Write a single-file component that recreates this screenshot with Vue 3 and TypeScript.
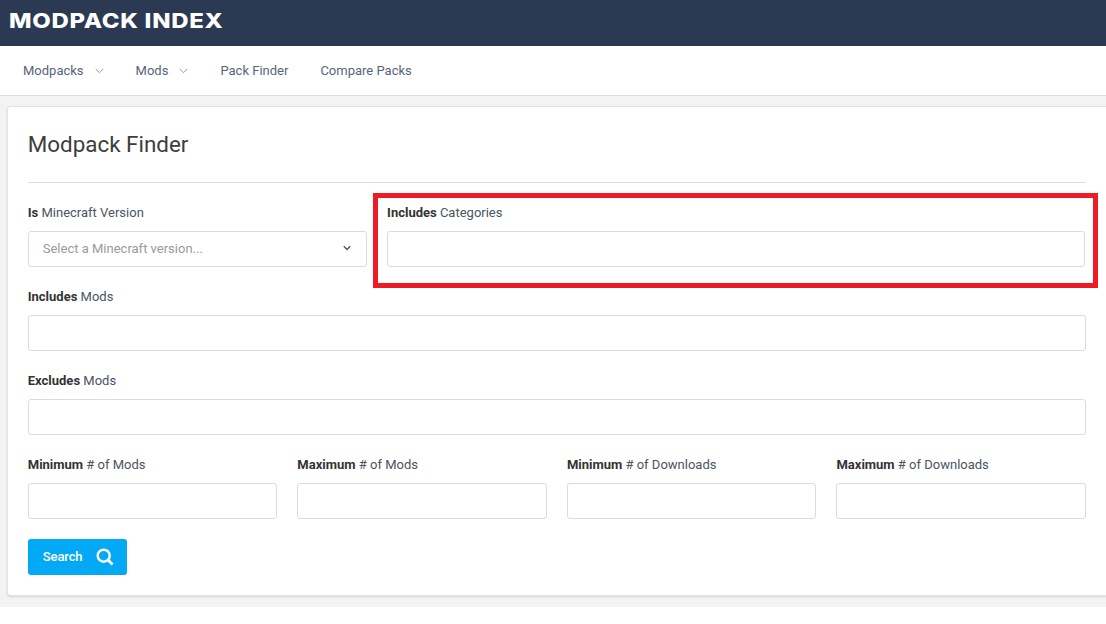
<script setup lang="ts">
const navItems = [
  { label: 'Modpacks', caret: true },
  { label: 'Mods', caret: true },
  { label: 'Pack Finder', caret: false },
  { label: 'Compare Packs', caret: false },
]
const quarters = [
  ['Minimum', '# of Mods'],
  ['Maximum', '# of Mods'],
  ['Minimum', '# of Downloads'],
  ['Maximum', '# of Downloads'],
]
</script>

<template>
  <div class="page">
    <header class="top"><span class="logo">MODPACK INDEX</span></header>
    <nav class="nav">
      <a v-for="n in navItems" :key="n.label" class="nav-item">
        {{ n.label }}
        <svg v-if="n.caret" class="caret" width="9" height="6" viewBox="0 0 9 6"><path d="M.7.9 4.5 4.7 8.3.9" fill="none" stroke="#8e99a8" stroke-width="1"/></svg>
      </a>
    </nav>
    <main class="main">
      <section class="card">
        <h1 class="title">Modpack Finder</h1>
        <hr class="rule" />
        <div class="row first">
          <div class="field third">
            <label><b>Is</b> Minecraft Version</label>
            <div class="box select">
              <span>Select a Minecraft version...</span>
              <svg width="8" height="6" viewBox="0 0 8 6"><path d="M.8 1.2 4 4.4 7.2 1.2" fill="none" stroke="#555" stroke-width="1.4"/></svg>
            </div>
          </div>
          <div class="field two-thirds">
            <label><b>Includes</b> Categories</label>
            <div class="box"></div>
            <div class="highlight"></div>
          </div>
        </div>
        <div class="row">
          <div class="field rest"><label><b>Includes</b> Mods</label><div class="box"></div></div>
        </div>
        <div class="row">
          <div class="field rest"><label><b>Excludes</b> Mods</label><div class="box"></div></div>
        </div>
        <div class="row">
          <div v-for="(q, i) in quarters" :key="i" class="field rest">
            <label><b>{{ q[0] }}</b> {{ q[1] }}</label>
            <div class="box"></div>
          </div>
        </div>
        <button class="btn" type="button">
          <span class="btn-text">Search</span>
          <svg width="18" height="18" viewBox="0 0 18 18"><circle cx="7.7" cy="7.7" r="6" fill="none" stroke="#fff" stroke-width="2.4"/><path d="M12 12l4.6 4.6" stroke="#fff" stroke-width="2.8"/></svg>
        </button>
      </section>
    </main>
  </div>
</template>

<style>
html, body { margin: 0; background: #fff; }
</style>

<style scoped>
.page { width: 1106px; font-family: Roboto, "Liberation Sans", sans-serif; font-size: 13px; color: #3f4a59; overflow: hidden; }
.top { height: 46px; background: #2b3a52; display: flex; align-items: center; padding-left: 9px; box-sizing: border-box; padding-bottom: 6px; }
.logo { font-family: Inter, sans-serif; font-weight: 800; font-size: 20.5px; letter-spacing: .6px; color: #fff; white-space: nowrap; transform: scaleX(1.168); transform-origin: left center; }
.nav { height: 50px; background: #fff; border-bottom: 1px solid #ddd; box-sizing: border-box; display: flex; align-items: center; padding-left: 23px; gap: 32px; }
.nav-item { color: #56657a; display: inline-flex; align-items: center; }
.caret { margin-left: 11px; margin-top: 1px; }
.main { background: #f3f3f3; padding: 10px 0 10px 7.25px; height: 511px; box-sizing: border-box; }
.card { position: relative; background: #fff; border: 1px solid #e3e3e3; border-right: 0; border-radius: 3px 0 0 3px; box-shadow: 0 1px 2px rgba(0,0,0,.12); width: 1098.75px; height: 490px; box-sizing: border-box; padding: 0 20px 0 19.5px; }
.title { margin: 0; padding-top: 23px; font-size: 22.4px; font-weight: 400; line-height: 28px; color: #3d3d3d; }
.rule { border: 0; border-top: 1px solid #ddd; margin: 24px 0 0; }
.row { display: flex; gap: 20px; margin-bottom: 20px; }
.first { margin-top: 20px; }
.field { position: relative; min-width: 0; }
.third { flex: 0 0 339.33px; }
.two-thirds { flex: 0 0 698px; }
.rest { flex: 1 1 0; }
label { display: block; font-size: 13px; line-height: 20px; margin-bottom: 8px; color: #4a5462; }
label b { font-weight: 700; color: #333; }
.box { height: 36px; box-sizing: border-box; border: 1px solid #dcdcdc; border-radius: 3px; background: #fff; }
.select { display: flex; align-items: center; justify-content: space-between; padding: 0 15px 2px 14px; color: #9a9a9a; }
.highlight { position: absolute; left: -14px; top: -10px; width: 725px; height: 95px; box-sizing: border-box; border: 5px solid #ed1c24; pointer-events: none; }
.btn { width: 99px; height: 36px; background: #03a9f4; border: 0; border-radius: 3px; color: #fff; font: 500 13px Roboto, sans-serif; display: flex; align-items: center; padding: 0 0 0 15px; gap: 14px; }
.btn-text { letter-spacing: -.1px; margin-top: -2px; }
</style>
